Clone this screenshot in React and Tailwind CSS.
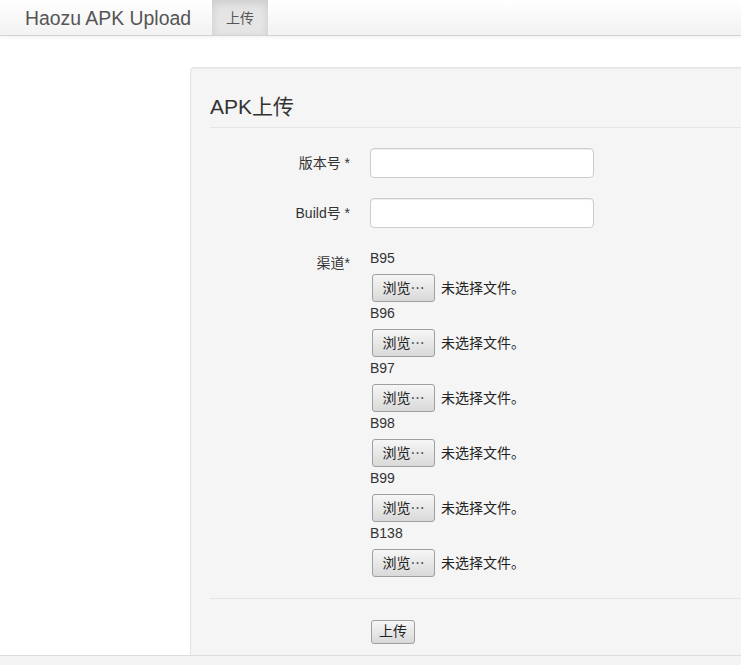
import React from "react";

const CHANNELS = ["B95", "B96", "B97", "B98", "B99", "B138"];

const FONT = { fontFamily: '"Liberation Sans", Arial, "Noto Sans CJK SC", sans-serif' };

function FileInput() {
  return (
    <div className="flex items-center h-[28px] ml-[2px]">
      <span className="h-[28px] w-[63px] flex items-center justify-center rounded-[3px] border border-[#9f9f9f] bg-gradient-to-b from-[#f6f6f6] to-[#d9d9d9] text-[14px] text-[#222] leading-none">
        浏览⋯
      </span>
      <span className="ml-[6px] text-[14px] text-[#222]">未选择文件。</span>
    </div>
  );
}

export default function App() {
  return (
    <div className="w-[741px] h-[665px] overflow-hidden bg-white text-[#333] flex flex-col" style={FONT}>
      <div className="h-[36px] shrink-0 flex bg-gradient-to-b from-white to-[#f2f2f2] border-b border-[#d4d4d4] shadow-[0_1px_4px_rgba(0,0,0,0.07)]">
        <div className="w-[212px] pl-[25px] text-[19.4px] leading-[36px] text-[#555]">Haozu APK Upload</div>
        <div className="w-[56px] text-center text-[14px] leading-[36px] text-[#555] bg-[#e5e5e5] shadow-[inset_0_3px_8px_rgba(0,0,0,0.12)]">
          上传
        </div>
      </div>

      <div className="flex-1 overflow-hidden relative">
        <div className="ml-[190px] mt-[31px] w-[620px] bg-[#f5f5f5] border border-[#e3e3e3] rounded-[4px] shadow-[inset_0_1px_1px_rgba(0,0,0,0.05)] pt-[19px] px-[19px]">
          <div className="text-[21px] leading-[40px] text-[#333] border-b border-[#e5e5e5] mb-[20px]">APK上传</div>

          <div className="flex mb-[20px]">
            <div className="w-[140px] text-right pt-[5px] text-[14px] leading-[20px]">版本号 *</div>
            <div className="ml-[20px]">
              <div className="w-[224px] h-[30px] bg-white border border-[#ccc] rounded-[4px] shadow-[inset_0_1px_1px_rgba(0,0,0,0.075)]" />
            </div>
          </div>

          <div className="flex mb-[20px]">
            <div className="w-[140px] text-right pt-[5px] text-[14px] leading-[20px]">Build号 *</div>
            <div className="ml-[20px]">
              <div className="w-[224px] h-[30px] bg-white border border-[#ccc] rounded-[4px] shadow-[inset_0_1px_1px_rgba(0,0,0,0.075)]" />
            </div>
          </div>

          <div className="flex mb-[20px]">
            <div className="w-[140px] text-right pt-[5px] text-[14px] leading-[20px]">渠道*</div>
            <div className="ml-[20px] flex flex-col">
              {CHANNELS.map((c) => (
                <div key={c} className="flex flex-col pb-[1px]">
                  <div className="text-[14px] leading-[20px] mb-[6px]">{c}</div>
                  <FileInput />
                </div>
              ))}
            </div>
          </div>

          <div className="border-t border-[#e5e5e5] pt-[20px] pl-[161px] pb-[20px]">
            <span className="inline-flex items-center justify-center w-[44px] h-[24px] rounded-[3px] border border-[#9f9f9f] bg-gradient-to-b from-[#f6f6f6] to-[#d9d9d9] text-[14px] text-[#222]">
              上传
            </span>
          </div>
        </div>
      </div>

      <div className="h-[10px] shrink-0 border-t border-[#dddddd] bg-[#f4f4f4]" />
    </div>
  );
}
